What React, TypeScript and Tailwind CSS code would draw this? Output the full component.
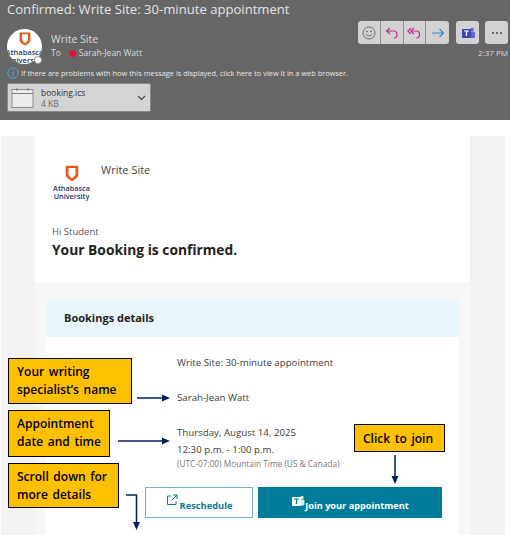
import React from "react";

const font = { fontFamily: '"Open Sans", "Noto Sans", sans-serif' };

function Shield({ w, h }: { w: number; h: number }) {
  return (
    <svg width={w} height={h} viewBox="0 0 20 24" fill="none" className="block">
      <path d="M1 1 H19 V14 Q19 18 10 23 Q1 18 1 14 Z" fill="#e8591c" />
      <path d="M5 4 H15 V13 Q15 16 10 19 Q5 16 5 13 Z" fill="#fff" />
    </svg>
  );
}

function Callout({ className, children }: { className: string; children: React.ReactNode }) {
  return (
    <div className={`absolute bg-[#ffc000] border border-black text-black text-[12px] leading-[18px] font-semibold [word-spacing:1.5px] pl-2 ${className}`}>
      {children}
    </div>
  );
}

function Arrow({ className, w, h, d, tip }: { className: string; w: number; h: number; d: string; tip: string }) {
  return (
    <svg className={`absolute ${className}`} width={w} height={h} viewBox={`0 0 ${w} ${h}`} fill="none">
      <path d={d} stroke="#002060" strokeWidth="1.5" />
      <path d={tip} fill="#002060" />
    </svg>
  );
}

function ToolBtn({ children, border = true }: { children: React.ReactNode; border?: boolean }) {
  return (
    <div className={`w-[23px] h-[23px] flex items-center justify-center ${border ? "border-r border-[#8f8f8f]" : ""}`}>
      {children}
    </div>
  );
}

export default function App() {
  return (
    <div className="relative w-[510px] h-[535px] overflow-hidden bg-white" style={font}>
      {/* Email header */}
      <header className="relative h-[120px] bg-[#666666] text-[#e6e6e6]">
        <div className="pl-[7px] text-[13.1px] leading-[19px] whitespace-nowrap text-[#e4e4e4]">
          Confirmed: Write Site: 30-minute appointment
        </div>
        <div className="flex pl-[7px] pt-[10px]">
          <div className="relative w-[35px] h-[35px]">
            <div className="w-[35px] h-[35px] rounded-full bg-white overflow-hidden flex flex-col items-center">
              <div className="mt-[2px] h-[18px]"><Shield w={12} h={16} /></div>
              <div className="text-[7.5px] leading-[8px] font-semibold text-[#23356b] text-center whitespace-nowrap">
                Athabasca<br />University
              </div>
            </div>
            <span className="absolute left-[27px] top-[27px] w-[8px] h-[8px] rounded-full bg-white border border-[#999]" />
          </div>
          <div className="pl-[9px] pt-[3px]">
            <div className="text-[10.5px] leading-[14px] text-[#dcdcdc]">Write Site</div>
            <div className="flex items-center text-[8.5px] leading-[12px] mt-[1px] text-[#dcdcdc]">
              <span>To</span>
              <span className="w-[7px] h-[7px] rounded-full bg-[#e8112d] ml-[8px] mr-[3px]" />
              <span>Sarah-Jean Watt</span>
            </div>
          </div>
        </div>
        <div className="flex items-center pl-[7px] mt-[3px] text-[7.4px] leading-[11px] text-[#e8e8e8] whitespace-nowrap">
          <svg width="12" height="12" viewBox="0 0 12 12" fill="none" className="mr-[2px]">
            <circle cx="6" cy="6" r="5.2" stroke="#4ea6dc" />
            <path d="M6 3 V4 M6 5 V9" stroke="#4ea6dc" />
          </svg>
          If there are problems with how this message is displayed, click here to view it in a web browser.
        </div>
        <div className="flex items-center w-[144px] h-[29px] ml-[7px] mt-[4px] bg-[#d4d4d4] rounded-[2px] border border-[#8a8a8a]">
          <svg width="24" height="22" viewBox="0 0 24 22" fill="none" className="ml-[3px] shrink-0">
            <rect x="1" y="2.5" width="21" height="18" fill="#ececec" stroke="#8e8e8e" />
            <path d="M1 6.5 H22 M6 1 V4 M17 1 V4" stroke="#7d7d7d" />
          </svg>
          <div className="ml-[6px] text-[8.5px] leading-[11px] text-[#333] flex-1">
            booking.ics
            <div className="text-[#666]">4 KB</div>
          </div>
          <svg width="9" height="6" viewBox="0 0 9 6" fill="none" className="mr-[4px]">
            <path d="M1 1 L4.5 4.5 L8 1" stroke="#444" strokeWidth="1.2" />
          </svg>
        </div>

        {/* Toolbar overlays the right of the header */}
        <div className="absolute top-[21px] left-[358px] flex items-start gap-[7px]">
          <div className="flex h-[23px] w-[91px] bg-[#d2d2d2] rounded-[3px] items-center overflow-hidden">
            <ToolBtn>
              <svg width="14" height="14" viewBox="0 0 14 14" fill="none" stroke="#666" strokeWidth="0.9">
                <circle cx="7" cy="7" r="6" />
                <circle cx="5" cy="5.5" r="0.5" fill="#666" />
                <circle cx="9" cy="5.5" r="0.5" fill="#666" />
                <path d="M4 8.5 Q7 11.5 10 8.5" />
              </svg>
            </ToolBtn>
            <ToolBtn>
              <svg width="14" height="14" viewBox="0 0 14 14" fill="none" stroke="#c0308f" strokeWidth="1.2">
                <path d="M5 2 L1.5 5 L5 8 M1.5 5 H9 Q12 5 12 8.5 Q12 12 9 12" />
              </svg>
            </ToolBtn>
            <ToolBtn>
              <svg width="14" height="14" viewBox="0 0 14 14" fill="none" stroke="#c0308f" strokeWidth="1.2">
                <path d="M4 2 L0.8 5 L4 8 M7 2 L3.8 5 L7 8 M3.8 5 H9.5 Q12.5 5 12.5 8.5 Q12.5 12 9.5 12" />
              </svg>
            </ToolBtn>
            <ToolBtn border={false}>
              <svg width="14" height="14" viewBox="0 0 14 14" fill="none" stroke="#2f86c5" strokeWidth="1.1">
                <path d="M1 7 H12.5 M8.5 3 L12.5 7 L8.5 11" />
              </svg>
            </ToolBtn>
          </div>
          <div className="w-[23px] h-[23px] bg-[#d2d2d2] rounded-[3px] flex items-center justify-center">
            <svg width="14" height="14" viewBox="0 0 14 14">
              <circle cx="11" cy="3.5" r="1.8" fill="#5b64d8" />
              <rect x="8" y="5.5" width="6" height="6.5" rx="1.5" fill="#5b64d8" />
              <rect x="1" y="3" width="9" height="9" rx="1" fill="#3b44b8" />
              <path d="M3 5 H8 M5.5 5 V10" stroke="#fff" strokeWidth="1.2" />
            </svg>
          </div>
          <div className="w-[23px] h-[23px] -ml-[1px] bg-[#d2d2d2] rounded-[3px] flex items-center justify-center gap-[2px]">
            <span className="w-[2px] h-[2px] rounded-full bg-[#444]" />
            <span className="w-[2px] h-[2px] rounded-full bg-[#444]" />
            <span className="w-[2px] h-[2px] rounded-full bg-[#444]" />
          </div>
        </div>
        <div className="absolute top-[47px] right-[2px] text-[8px] leading-[11px] text-[#dcdcdc]">2:37 PM</div>
      </header>

      {/* Message body */}
      <main className="flex h-[415px] pt-[16px] pl-[1px] pr-[5px]">
        <div className="w-[34px] bg-[#f3f3f3]" />
        <div className="w-[435px] bg-white flex flex-col">
          <div className="h-[146px] pl-[17px] pt-[29px] text-[#333]">
            <div className="flex">
              <div className="w-[39px] flex flex-col items-center">
                <Shield w={14} h={17} />
                <div className="text-[7.3px] leading-[8px] font-semibold text-[#23356b] text-center mt-[2px]">
                  Athabasca<br />University
                </div>
              </div>
              <div className="pl-[10px] text-[11px] leading-[16px] -mt-[3px] text-[#444]">Write Site</div>
            </div>
            <div className="mt-[25px] text-[9.5px] leading-[13px] text-[#555]">Hi Student</div>
            <div className="mt-[2px] text-[13.8px] leading-[20px] font-bold text-[#222]">Your Booking is confirmed.</div>
          </div>
          <div className="flex-1 bg-[#f7f7f7] px-[11px] pt-[18px]">
            <div className="h-[37px] bg-[#e9f6fb] pl-[18px] flex items-center text-[11px] font-bold text-[#222]">
              Bookings details
            </div>
            <div className="bg-white h-[198px] pt-[19px] text-[#3c3c3c]">
              <div className="pl-[131px] text-[9.7px] leading-[14px]">Write Site: 30-minute appointment</div>
              <div className="pl-[131px] mt-[21px] text-[9.7px] leading-[14px]">Sarah-Jean Watt</div>
              <div className="pl-[131px] mt-[21px] text-[9.7px] leading-[14px]">Thursday, August 14, 2025</div>
              <div className="pl-[131px] mt-[3px] text-[9.7px] leading-[14px]">12:30 p.m. - 1:00 p.m.</div>
              <div className="pl-[131px] mt-[1px] text-[8.3px] leading-[12px] text-[#777]">(UTC-07:00) Mountain Time (US &amp; Canada)</div>
              <div className="flex pl-[99px] pt-[17px] gap-[5px]">
                <div className="w-[108px] h-[31px] border-[1.5px] border-[#6bb5c8] flex items-center justify-center text-[9.3px] font-bold text-[#0e7c98]">
                  <svg width="12" height="12" viewBox="0 0 12 12" fill="none" stroke="#0e7c98" strokeWidth="1" className="mr-[2px] -mt-[5px]">
                    <path d="M5 2 H1.5 V10.5 H10 V7 M7 1 H11 V5 M11 1 L5.5 6.5" />
                  </svg>
                  <span className="pt-[6px]">Reschedule</span>
                </div>
                <div className="w-[184px] h-[31px] bg-[#007c9b] flex items-center justify-center text-[9.2px] font-bold text-white">
                  <svg width="14" height="14" viewBox="0 0 14 14" className="-mt-[4px]">
                    <circle cx="11" cy="3.5" r="1.7" fill="#e6e6e6" />
                    <rect x="8" y="5.5" width="5.5" height="6" rx="1.5" fill="#e6e6e6" />
                    <rect x="1" y="3" width="9" height="9" rx="1" fill="#fff" />
                    <path d="M3 5 H8 M5.5 5 V10" stroke="#007c9b" strokeWidth="1.2" />
                  </svg>
                  <span className="pt-[6px]">Join your appointment</span>
                </div>
              </div>
            </div>
          </div>
        </div>
        <div className="w-[35px] bg-[#f3f3f3]" />
      </main>

      {/* Annotations over the page */}
      <Callout className="left-[8px] top-[358px] w-[124px] h-[46px] pt-[4px]">
        Your writing<br />specialist’s name
      </Callout>
      <Callout className="left-[8px] top-[410px] w-[102px] h-[47px] pt-[4px]">
        Appointment<br />date and time
      </Callout>
      <Callout className="left-[8px] top-[463px] w-[111px] h-[45px] pt-[4px]">
        Scroll down for<br />more details
      </Callout>
      <Callout className="left-[354px] top-[424px] w-[91px] h-[28px] pt-[5px]">Click to join</Callout>

      <Arrow className="left-[136px] top-[393px]" w={34} h={10} d="M1 5 H28" tip="M26 1.5 L34 5 L26 8.5 Z" />
      <Arrow className="left-[117px] top-[436px]" w={53} h={10} d="M1 5 H47" tip="M45 1.5 L53 5 L45 8.5 Z" />
      <Arrow className="left-[126px] top-[494px]" w={16} h={36} d="M0 1 H10.5 V30" tip="M7 28 L14 28 L10.5 36 Z" />
      <Arrow className="left-[390px] top-[455px]" w={10} h={29} d="M5 0 V22" tip="M1.5 21 L8.5 21 L5 29 Z" />
    </div>
  );
}
